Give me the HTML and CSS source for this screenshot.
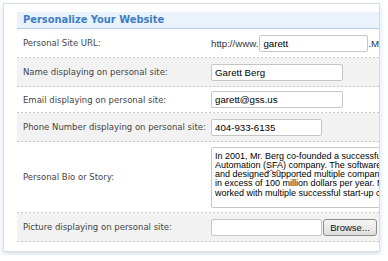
FILE: index.html
```html
<!DOCTYPE html>
<html lang="en">
<head>
<meta charset="utf-8">
<title>Personalize Your Website</title>
<link rel="stylesheet" href="styles.css">
</head>
<body>
<div class="page">
  <section class="card">
    <div class="panel">
      <h2 class="panel-title">Personalize Your Website</h2>
      <div class="row">
        <label class="label">Personal Site URL:</label>
        <div class="value">
          <span class="affix">http://www.</span><input class="field field-url" value="garett"><span class="affix">.MyGSSsite.com</span>
        </div>
      </div>
      <div class="row row-alt">
        <label class="label">Name displaying on personal site:</label>
        <div class="value"><input class="field field-long" value="Garett Berg"></div>
      </div>
      <div class="row row-compact">
        <label class="label">Email displaying on personal site:</label>
        <div class="value"><input class="field field-long" value="garett@gss.us"></div>
      </div>
      <div class="row row-alt">
        <label class="label">Phone Number displaying on personal site:</label>
        <div class="value"><input class="field field-short" value="404-933-6135"></div>
      </div>
      <div class="row row-bio">
        <label class="label">Personal Bio or Story:</label>
        <div class="value">
          <div class="bio" role="textbox" aria-multiline="true">In 2001, Mr. Berg co-founded a successful Sales Force
Automation (<span class="misspelt">SFA</span>) company. The software he architected
and designed supported multiple companies with revenues
in excess of 100 million dollars per year. Mr. Berg has
worked with multiple successful start-up companies.</div>
        </div>
      </div>
      <div class="row row-alt">
        <label class="label">Picture displaying on personal site:</label>
        <div class="value">
          <input class="field field-short" value=""><button class="browse" type="button">Browse...</button>
        </div>
      </div>
    </div>
  </section>
</div>
</body>
</html>
```
FILE: styles.css
```css
html, body {
  margin: 0;
  padding: 0;
  background: #ffffff;
}

.page {
  padding: 3px;
}

.card {
  box-sizing: border-box;
  width: 377px;
  padding: 8px 0 9px 13px;
  background: #ffffff;
  border: 1px solid #dcdcdc;
  box-shadow: 0 3px 6px rgba(140, 175, 215, 0.35);
  overflow: hidden;
}

.panel {
  width: 430px;
}

.panel-title {
  margin: 0;
  height: 16px;
  padding-left: 6px;
  line-height: 16px;
  font-family: "DejaVu Sans", Verdana, sans-serif;
  font-size: 9.9px;
  font-weight: bold;
  color: #3c80c3;
  background: #eaf2fb;
  border-bottom: 1px solid #b3cde8;
}

.row {
  display: grid;
  grid-template-columns: 194px 1fr;
  align-items: center;
  min-height: 28px;
  background-image: linear-gradient(to right, #c8c8c8 50%, transparent 50%);
  background-size: 4px 1px;
  background-repeat: repeat-x;
  background-position: left bottom;
  padding-bottom: 1px;
}

.row-alt {
  background-color: #f2f2f2;
}

.row-compact {
  min-height: 25px;
}

.row-bio {
  min-height: 70px;
}

.label {
  padding-left: 6px;
  font-family: "DejaVu Sans", Verdana, sans-serif;
  font-size: 8.5px;
  color: #444444;
}

.value {
  display: flex;
  align-items: center;
  white-space: nowrap;
  font-family: "Liberation Sans", Arial, sans-serif;
  font-size: 9.7px;
  color: #333333;
}

.affix {
  padding-right: 1px;
}

.field {
  box-sizing: border-box;
  height: 17px;
  margin: 0;
  padding: 0 3px;
  font-family: "Liberation Sans", Arial, sans-serif;
  font-size: 9.7px;
  color: #000000;
  background: #ffffff;
  border: 1px solid #c6c6c6;
  border-radius: 2px;
  outline: none;
}

.field-url {
  width: 109px;
}

.field-long {
  width: 132px;
}

.field-short {
  width: 111px;
}

.bio {
  box-sizing: border-box;
  width: 230px;
  height: 61px;
  padding: 4px 3px;
  font-family: "Liberation Sans", Arial, sans-serif;
  font-size: 9px;
  line-height: 9.3px;
  color: #000000;
  background: #ffffff;
  border: 1px solid #c6c6c6;
  border-radius: 2px;
  white-space: pre;
  overflow: hidden;
}

.misspelt {
  text-decoration: underline wavy #e03030;
  text-decoration-thickness: 1px;
  text-underline-offset: 1px;
}

.browse {
  box-sizing: border-box;
  height: 17px;
  width: 54px;
  margin: 0 0 0 1px;
  padding: 0;
  font-family: "Liberation Sans", Arial, sans-serif;
  font-size: 9.5px;
  color: #111111;
  background: linear-gradient(to bottom, #f6f6f6, #dedede);
  border: 1px solid #8c8c8c;
  border-radius: 3px;
}
```
